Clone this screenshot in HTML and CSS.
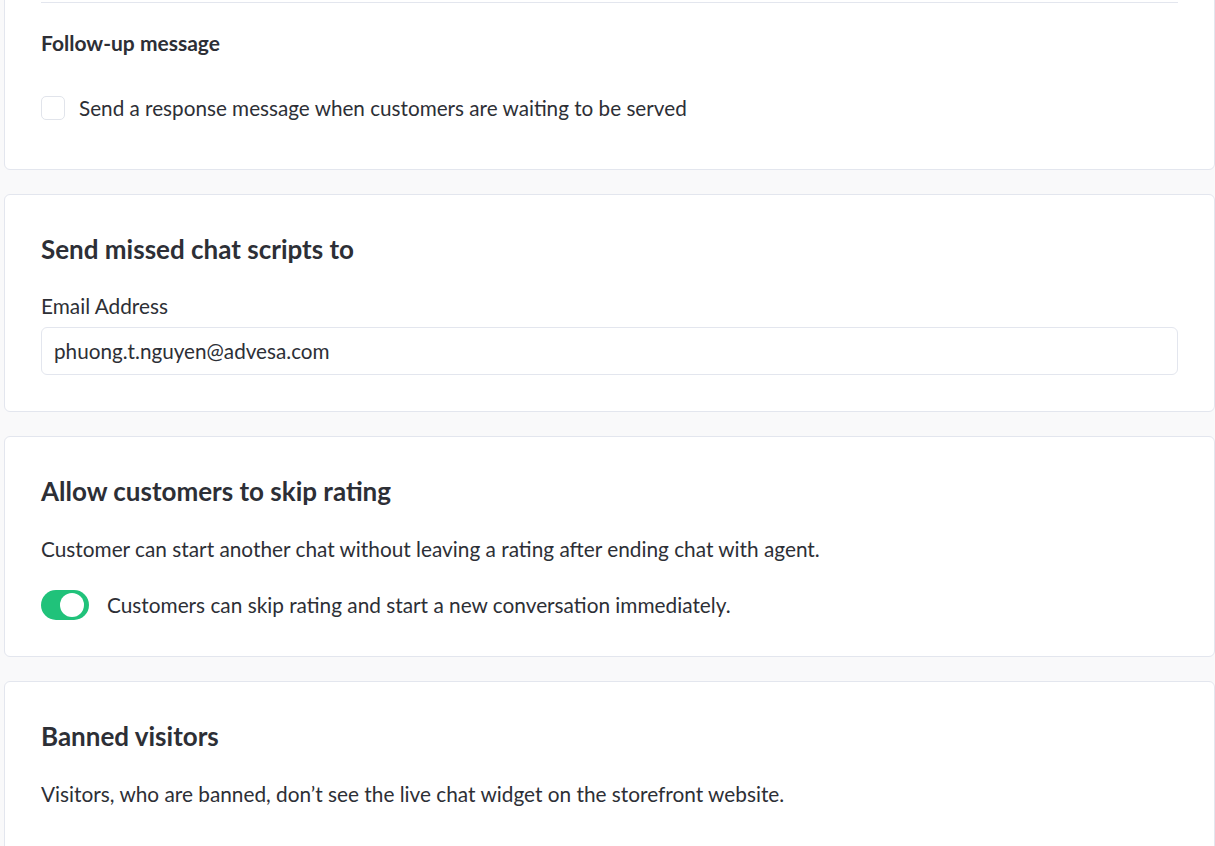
FILE: index.html
```html
<!DOCTYPE html>
<html lang="en">
<head>
<meta charset="utf-8">
<title>Live chat settings</title>
<link rel="stylesheet" href="styles.css">
</head>
<body>
<main class="page">
  <section class="card card-first">
    <hr class="divider">
    <h3 class="subtitle">Follow-up message</h3>
    <label class="check-row">
      <span class="checkbox"></span>
      <span class="check-label">Send a response message when customers are waiting to be served</span>
    </label>
  </section>

  <section class="card">
    <h2 class="title">Send missed chat scripts to</h2>
    <label class="field-label">Email Address</label>
    <div class="input">phuong.t.nguyen@advesa.com</div>
  </section>

  <section class="card">
    <h2 class="title">Allow customers to skip rating</h2>
    <p class="desc">Customer can start another chat without leaving a rating after ending chat with agent.</p>
    <div class="toggle-row">
      <span class="toggle"><span class="knob"></span></span>
      <span class="toggle-label">Customers can skip rating and start a new conversation immediately.</span>
    </div>
  </section>

  <section class="card card-last">
    <h2 class="title">Banned visitors</h2>
    <p class="desc">Visitors, who are banned, don’t see the live chat widget on the storefront website.</p>
  </section>
</main>
</body>
</html>
```

FILE: styles.css
```css
* { box-sizing: border-box; }
html, body { margin: 0; padding: 0; }
body {
  background: #f9f9fa;
  font-family: Lato, "Open Sans", sans-serif;
  color: #2d2f36;
  height: 846px;
  overflow: hidden;
}
.page {
  display: flex;
  flex-direction: column;
  gap: 24px;
  padding-left: 4px;
  margin-top: -39px;
}
.card {
  background: #fff;
  border: 1px solid #e3e6ee;
  border-radius: 6px;
  padding: 38px 36px 36px 36px;
}
.card-first {
  padding-top: 40px;
  padding-bottom: 48px;
}
.divider {
  border: 0;
  border-top: 1px solid #e3e6ee;
  margin: 0;
}
.subtitle {
  font-size: 21px;
  font-weight: 700;
  line-height: 26px;
  margin: 27px 0 0 0;
}
.check-row {
  display: flex;
  align-items: center;
  gap: 14px;
  margin-top: 39px;
}
.checkbox {
  width: 24px;
  height: 24px;
  border: 1px solid #e1e4eb;
  border-radius: 5px;
  background: #fff;
  flex: none;
}
.check-label { font-size: 20.7px; line-height: 26px; }
.title {
  font-size: 26px;
  font-weight: 700;
  line-height: 32px;
  margin: 0;
}
.field-label {
  display: block;
  font-size: 20.8px;
  line-height: 26px;
  margin-top: 28px;
}
.input {
  margin-top: 8px;
  height: 48px;
  border: 1px solid #e3e6ee;
  border-radius: 6px;
  padding: 0 12px;
  display: flex;
  align-items: center;
  font-size: 20.7px;
}
.desc {
  font-size: 20.8px;
  line-height: 26px;
  margin: 29px 0 0 0;
}
.toggle-row {
  display: flex;
  align-items: center;
  gap: 18px;
  margin-top: 28px;
}
.toggle {
  width: 48px;
  height: 30px;
  border-radius: 15px;
  background: #20c27a;
  display: flex;
  align-items: center;
  justify-content: flex-end;
  padding-right: 5px;
  flex: none;
}
.knob {
  width: 24px;
  height: 24px;
  border-radius: 50%;
  background: #fff;
}
.toggle-label { font-size: 20.8px; line-height: 26px; }
.card-last { min-height: 220px; }
```
